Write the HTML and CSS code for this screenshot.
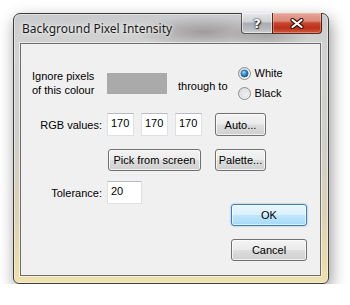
FILE: index.html
```html
<!DOCTYPE html>
<html>
<head>
<meta charset="utf-8">
<link rel="stylesheet" href="styles.css">
</head>
<body>
<div class="window">
  <div class="titlebar">
    <span class="title">Background Pixel Intensity</span>
    <div class="caption">
      <div class="cbtn help">?</div>
      <div class="cbtn close">
        <svg width="14" height="11" viewBox="0 0 14 11"><path d="M2.5 2 L11.5 9 M11.5 2 L2.5 9" stroke="#3b0e06" stroke-width="4.2" stroke-linecap="round"/><path d="M2.5 2 L11.5 9 M11.5 2 L2.5 9" stroke="#ffffff" stroke-width="2.2" stroke-linecap="round"/></svg>
      </div>
    </div>
  </div>
  <div class="client">
    <div class="row r1">
      <div class="lbl2">Ignore pixels<br>of this colour</div>
      <div class="swatch"></div>
      <span class="through">through to</span>
      <div class="radios">
        <div class="radio">
          <svg width="13" height="13" viewBox="0 0 13 13">
            <defs>
              <linearGradient id="rg" x1="0" y1="0" x2="1" y2="1"><stop offset="0" stop-color="#d6d6d6"/><stop offset="1" stop-color="#fbfbfb"/></linearGradient>
              <radialGradient id="dot" cx="0.4" cy="0.35" r="0.7"><stop offset="0" stop-color="#9fe0ff"/><stop offset="0.5" stop-color="#2e8fd0"/><stop offset="1" stop-color="#114d7e"/></radialGradient>
            </defs>
            <circle cx="6.5" cy="6.5" r="6" fill="url(#rg)" stroke="#8a8c8e"/>
            <circle cx="6.5" cy="6.5" r="3.6" fill="url(#dot)" stroke="#1e5a8a" stroke-width="0.6"/>
          </svg>
          <span>White</span>
        </div>
        <div class="radio">
          <svg width="13" height="13" viewBox="0 0 13 13">
            <circle cx="6.5" cy="6.5" r="6" fill="url(#rg)" stroke="#8a8c8e"/>
            <circle cx="6.5" cy="6.5" r="4" fill="none" stroke="#e2e2e2" stroke-width="1"/>
          </svg>
          <span>Black</span>
        </div>
      </div>
    </div>
    <div class="row r2">
      <span class="rlbl">RGB values:</span>
      <div class="edit">170</div>
      <div class="edit">170</div>
      <div class="edit">170</div>
      <div class="btn auto">Auto...</div>
    </div>
    <div class="row r3">
      <div class="btn pick">Pick from screen</div>
      <div class="btn palette">Palette...</div>
    </div>
    <div class="row r4">
      <span class="rlbl">Tolerance:</span>
      <div class="edit tol">20</div>
    </div>
    <div class="btn ok">OK</div>
    <div class="btn cancel">Cancel</div>
  </div>
</div>
</body>
</html>
```

FILE: styles.css
```css
html, body {
  margin: 0;
  padding: 0;
  background: #ffffff;
}
body {
  font-family: "Liberation Sans", Arial, sans-serif;
  font-size: 11px;
  color: #000;
}
.window {
  position: relative;
  box-sizing: border-box;
  margin: 13px 0 0 13px;
  width: 316px;
  height: 271px;
  border: 1px solid #3c3c3c;
  border-radius: 7px 7px 6px 6px;
  padding: 0 7px 7px 6px;
  display: flex;
  flex-direction: column;
  background:
    radial-gradient(ellipse 70px 16px at 190px 18px, rgba(70,60,60,0.35), rgba(70,60,60,0) 100%),
    radial-gradient(ellipse 40px 14px at 255px 22px, rgba(60,60,60,0.25), rgba(60,60,60,0) 100%),
    linear-gradient(to bottom, #c9cacc 0%, #d2d2d2 12%, #cfcfcb 45%, #dcd3b4 75%, #eadcaa 92%, #efe2b0 100%);
  box-shadow: inset 0 0 0 1px rgba(255,255,255,0.45), 2px 6px 16px rgba(0,0,0,0.42);
}
.titlebar {
  height: 29px;
  display: flex;
  justify-content: space-between;
  flex-shrink: 0;
}
.title {
  font-family: "Noto Sans", "Open Sans", sans-serif;
  font-size: 12px;
  line-height: 29px;
  padding-left: 2px;
  color: #1a1a1a;
  text-shadow: 0 0 6px rgba(255,255,255,0.9), 0 0 3px rgba(255,255,255,0.8);
}
.caption {
  display: flex;
  margin-top: -1px;
  margin-right: -1px;
  height: 21px;
}
.cbtn {
  box-sizing: border-box;
  height: 21px;
  display: flex;
  align-items: center;
  justify-content: center;
}
.help {
  width: 31px;
  border: 1px solid rgba(40,40,40,0.75);
  border-top: none;
  border-right: none;
  border-radius: 0 0 0 4px;
  background: linear-gradient(to bottom, #e6e7e9 0%, #cfd1d4 45%, #a9acb1 50%, #b7babe 80%, #cdd0d3 100%);
  box-shadow: inset 0 0 0 1px rgba(255,255,255,0.5);
  color: #fff;
  font-family: "DejaVu Sans", sans-serif;
  font-weight: bold;
  font-size: 13px;
  text-shadow: 0 0 1px #222, 0 0 2px #222, 1px 1px 1px #333;
}
.close {
  width: 50px;
  border: 1px solid rgba(60,20,15,0.85);
  border-top: none;
  border-radius: 0 0 4px 0;
  background: linear-gradient(to bottom, #e8a799 0%, #d98a7b 40%, #c9452c 50%, #b9321a 75%, #d4583c 100%);
  box-shadow: inset 0 0 0 1px rgba(255,220,210,0.35);
}
.client {
  flex: 1;
  box-sizing: border-box;
  border: 1px solid #6e6e6e;
  background: #f0f0f0;
  box-shadow: 0 0 0 1px rgba(255,255,255,0.55);
  padding: 19px 0 0 11px;
  display: flex;
  flex-direction: column;
}
.row {
  display: flex;
  align-items: center;
}
.r1 {
  height: 40px;
}
.lbl2 {
  width: 75px;
  line-height: 14px;
}
.swatch {
  width: 60px;
  height: 21px;
  background: #aaaaaa;
}
.through {
  margin-left: 11px;
  padding-top: 5px;
}
.radios {
  margin-left: 10px;
  display: flex;
  flex-direction: column;
}
.radio {
  height: 20px;
  display: flex;
  align-items: center;
  gap: 4px;
}
.radio svg {
  display: block;
}
.r2 {
  margin-top: 10px;
  height: 23px;
  gap: 7px;
}
.rlbl {
  width: 70px;
  margin-right: -2px;
  text-align: right;
}
.edit {
  box-sizing: border-box;
  width: 27px;
  height: 23px;
  background: #fff;
  border: 1px solid #dde1e6;
  border-top-color: #b8bbc2;
  padding-left: 3px;
  line-height: 18px;
}
.tol {
  width: 35px;
  margin-left: 7px;
}
.btn {
  box-sizing: border-box;
  height: 22px;
  border: 1px solid #707070;
  border-radius: 3px;
  background: linear-gradient(to bottom, #f3f3f3 0%, #ebebeb 48%, #dddddd 52%, #cfcfcf 100%);
  box-shadow: inset 0 0 0 1px rgba(255,255,255,0.7);
  display: flex;
  align-items: center;
  justify-content: center;
}
.auto {
  width: 51px;
  height: 23px;
  margin-left: 6px;
}
.r3 {
  margin-top: 13px;
  padding-left: 76px;
}
.pick {
  width: 93px;
}
.palette {
  width: 51px;
  margin-left: 14px;
}
.r4 {
  margin-top: 10px;
  height: 23px;
}
.ok {
  align-self: flex-end;
  width: 76px;
  margin-right: 13px;
  border-color: #3c7fb1;
  background: linear-gradient(to bottom, #eaf6fd 0%, #d9f0fc 48%, #bee6fd 52%, #a7d9f5 100%);
  box-shadow: inset 0 0 0 1px rgba(255,255,255,0.6), 0 0 2px rgba(60,150,220,0.7);
}
.cancel {
  align-self: flex-end;
  width: 76px;
  margin-right: 13px;
  margin-top: 13px;
}
```
